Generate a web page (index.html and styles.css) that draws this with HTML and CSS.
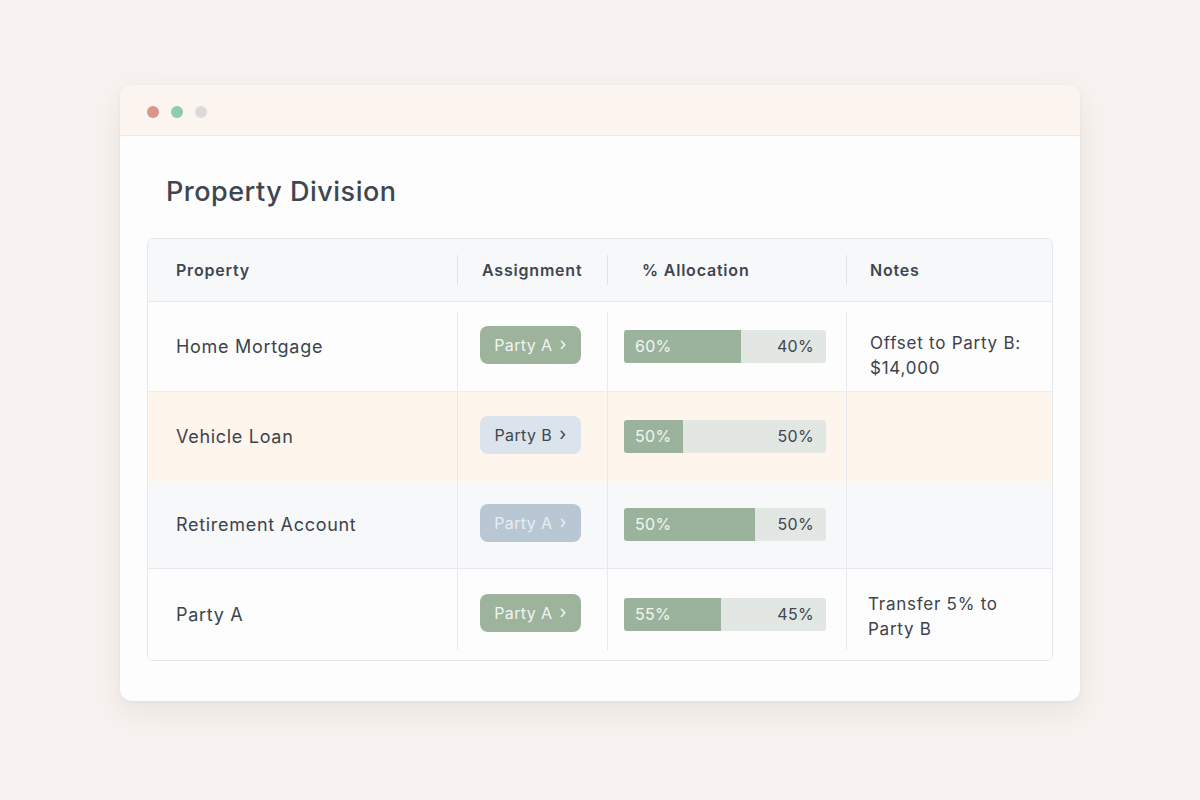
FILE: index.html
```html
<!DOCTYPE html>
<html>
<head>
<meta charset="utf-8">
<link rel="stylesheet" href="styles.css">
</head>
<body>
<div class="window">
  <div class="titlebar">
    <span class="dot red"></span>
    <span class="dot green"></span>
    <span class="dot gray"></span>
  </div>
  <div class="content">
    <h1 class="title">Property Division</h1>
    <div class="table">
      <div class="row head">
        <div class="cell c1">Property</div>
        <div class="cell c2">Assignment</div>
        <div class="cell c3">% Allocation</div>
        <div class="cell c4">Notes</div>
      </div>
      <div class="row r1">
        <div class="cell c1">Home Mortgage</div>
        <div class="cell c2"><span class="pill sage">Party A <span class="chev">›</span></span></div>
        <div class="cell c3">
          <div class="bar"><div class="fill" style="width:58%">60%</div><div class="rest">40%</div></div>
        </div>
        <div class="cell c4 note n1">Offset to Party B:<br>$14,000</div>
      </div>
      <div class="row r2">
        <div class="cell c1">Vehicle Loan</div>
        <div class="cell c2"><span class="pill blue">Party B <span class="chev">›</span></span></div>
        <div class="cell c3">
          <div class="bar"><div class="fill" style="width:29%">50%</div><div class="rest">50%</div></div>
        </div>
        <div class="cell c4 note"></div>
      </div>
      <div class="row r3">
        <div class="cell c1">Retirement Account</div>
        <div class="cell c2"><span class="pill slate">Party A <span class="chev">›</span></span></div>
        <div class="cell c3">
          <div class="bar"><div class="fill" style="width:65%">50%</div><div class="rest">50%</div></div>
        </div>
        <div class="cell c4 note"></div>
      </div>
      <div class="row r4">
        <div class="cell c1">Party A</div>
        <div class="cell c2"><span class="pill sage">Party A <span class="chev">›</span></span></div>
        <div class="cell c3">
          <div class="bar"><div class="fill" style="width:48%">55%</div><div class="rest">45%</div></div>
        </div>
        <div class="cell c4 note n4">Transfer 5% to<br>Party B</div>
      </div>
    </div>
  </div>
</div>
</body>
</html>
```
FILE: styles.css
```css
* { box-sizing: border-box; }
html, body { margin: 0; padding: 0; }
body {
  background: #f8f3f0;
  font-family: "Inter", "Open Sans", sans-serif;
  color: #3d4450;
  width: 1200px;
  height: 800px;
  overflow: hidden;
}
.window {
  width: 960px;
  margin: 85px auto 0;
  background: #fdfdfd;
  border-radius: 12px;
  box-shadow: 0 10px 30px rgba(120, 100, 90, 0.12), 0 1px 3px rgba(120, 100, 90, 0.08);
  overflow: hidden;
}
.titlebar {
  height: 51px;
  background: #fcf4ef;
  border-bottom: 1px solid #f1e7e1;
  display: flex;
  align-items: center;
  gap: 12px;
  padding: 3px 0 0 27px;
}
.dot { width: 12px; height: 12px; border-radius: 50%; display: block; }
.dot.red { background: #d9968f; }
.dot.green { background: #8fcbb0; }
.dot.gray { background: #dcdad9; }
.content {
  padding: 38px 27px 40px;
}
.title {
  margin: 0 0 29px 19px;
  font-size: 27px;
  font-weight: 500;
  line-height: 35px;
  color: #3e4651;
  letter-spacing: 0.5px;
}
.table {
  border: 1px solid #e4e6e9;
  border-radius: 6px;
  overflow: hidden;
  background: #fdfdfd;
}
.row {
  display: grid;
  grid-template-columns: 309px 150px 239px 1fr;
}
.cell {
  display: flex;
  align-items: center;
}
.head {
  height: 63px;
  background: #f7f8fa;
  border-bottom: 1px solid #e6e8eb;
  font-size: 16px;
  font-weight: 600;
  color: #3e4651;
  letter-spacing: 0.8px;
}
.head .cell + .cell {
  background: linear-gradient(#dfe2e6, #dfe2e6) left center / 1px 30px no-repeat;
}
.head .c1 { padding-left: 28px; }
.head .c2 { padding-left: 25px; }
.head .c3 { padding-left: 35px; }
.head .c4 { padding-left: 24px; }

.r1, .r2, .r3, .r4 { font-size: 18px; color: #3c434c; letter-spacing: 0.7px; }
.r1 { height: 90px; background: #fdfdfd; border-bottom: 1px solid #eceef0; }
.r2 { height: 89px; background: #fef6ec; }
.r3 { height: 88px; background: #f7f8fa; border-bottom: 1px solid #e6e8eb; }
.r4 { height: 91px; background: #fdfdfd; }

.r1 .cell + .cell, .r2 .cell + .cell, .r3 .cell + .cell, .r4 .cell + .cell {
  background: linear-gradient(#e8e9ec, #e8e9ec) left top / 1px 100% no-repeat;
}
.r1 .cell + .cell { background-position: left bottom; background-size: 1px calc(100% - 10px); }
.r4 .cell + .cell { background-size: 1px calc(100% - 10px); }

.c1 { padding-left: 28px; }
.r1 .c2, .r2 .c2, .r3 .c2, .r4 .c2 { padding-left: 23px; }
.r1 .c3, .r2 .c3, .r3 .c3, .r4 .c3 { padding-left: 17px; }
.note { padding-left: 24px; font-size: 17px; line-height: 25px; letter-spacing: 0.75px; }
.note.n1 { padding-top: 18px; }
.note.n4 { padding-top: 4px; padding-left: 22px; }

.pill {
  display: inline-flex;
  align-items: center;
  justify-content: center;
  gap: 7px;
  width: 101px;
  height: 38px;
  margin-top: -3px;
  border-radius: 8px;
  font-size: 16px;
  letter-spacing: 0.4px;
}
.chev { font-size: 18px; line-height: 1; margin-top: -2px; }
.pill.sage { background: #9db39c; color: #f1f5f0; }
.pill.blue { background: #dbe3ec; color: #3e4652; }
.pill.slate { background: #b9c7d4; color: #e8edf2; }

.bar {
  display: flex;
  width: 202px;
  height: 33px;
  margin-top: -1px;
  border-radius: 3px;
  overflow: hidden;
  background: #e2e7e4;
  font-size: 16px;
  letter-spacing: 0.3px;
}
.fill {
  background: #9bb39c;
  color: #f3f7f2;
  display: flex;
  align-items: center;
  padding-left: 11px;
  white-space: nowrap;
}
.rest {
  flex: 1;
  display: flex;
  align-items: center;
  justify-content: flex-end;
  padding-right: 12px;
  color: #3e4550;
}
```
